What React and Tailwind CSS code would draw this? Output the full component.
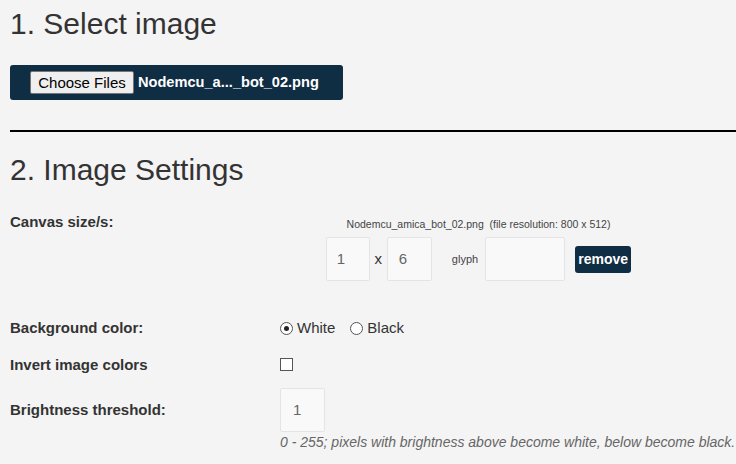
import { useState } from 'react';

export default function App() {
  const [bg, setBg] = useState('white');
  const [invert, setInvert] = useState(false);

  return (
    <div className="min-h-[464px] bg-[#f4f4f4] pl-[10px] text-[#333] font-['Liberation_Sans',Arial,sans-serif] overflow-hidden">
      <h1 className="pt-[7px] text-[30px] leading-[33px] font-normal">1. Select image</h1>

      <div className="mt-[25px] inline-flex h-[35px] items-center rounded-[3px] bg-[#0f2d43] pl-[20px] pr-[24px]">
        <button className="h-[23px] w-[104px] rounded-[2px] border border-[#767676] bg-[#efefef] text-[15px] leading-[21px] text-black">
          Choose Files
        </button>
        <span className="ml-[4px] text-[14.6px] font-bold text-white">Nodemcu_a..._bot_02.png</span>
      </div>

      <div className="mt-[30px] border-t-2 border-black" />

      <h2 className="mt-[21px] text-[30px] leading-[33px] font-normal">2. Image Settings</h2>

      {/* canvas size */}
      <div className="mt-[27px] flex">
        <div className="w-[270px] text-[15px] leading-[18px] font-bold">Canvas size/s:</div>
        <div className="flex w-[397px] flex-col items-center">
          <div className="mt-[5px] text-[10.5px] leading-[13px] text-[#444] whitespace-pre">
            Nodemcu_amica_bot_02.png  (file resolution: 800 x 512)
          </div>
          <div className="mt-[6px] flex items-center">
            <div className="flex h-[44px] w-[44px] items-center rounded-[2px] border border-[#e4e4e4] bg-[#f9f9f9] pl-[10px] text-[15px] text-[#666]">1</div>
            <span className="w-[17px] text-center text-[15px]">x</span>
            <div className="flex h-[44px] w-[45px] items-center rounded-[2px] border border-[#e4e4e4] bg-[#f9f9f9] pl-[11px] text-[15px] text-[#666]">6</div>
            <span className="ml-[20px] mr-[7px] text-[11px] text-[#444]">glyph</span>
            <div className="h-[44px] w-[80px] rounded-[2px] border border-[#e4e4e4] bg-[#f9f9f9]" />
            <button className="ml-[10px] h-[27px] w-[56px] rounded-[3px] bg-[#0f2d43] text-[14px] font-bold text-white">remove</button>
          </div>
        </div>
      </div>

      {/* background color */}
      <div className="mt-[38px] flex items-center">
        <div className="w-[270px] text-[15px] leading-[18px] font-bold">Background color:</div>
        <label className="flex items-center cursor-pointer" onClick={() => setBg('white')}>
          <span className="flex h-[13px] w-[13px] items-center justify-center rounded-full border border-[#555] bg-white">
            {bg === 'white' && <span className="h-[5px] w-[5px] rounded-full bg-[#222]" />}
          </span>
          <span className="ml-[4px] text-[15px] leading-[18px]">White</span>
        </label>
        <label className="ml-[15px] flex items-center cursor-pointer" onClick={() => setBg('black')}>
          <span className="flex h-[13px] w-[13px] items-center justify-center rounded-full border border-[#555] bg-white">
            {bg === 'black' && <span className="h-[5px] w-[5px] rounded-full bg-[#222]" />}
          </span>
          <span className="ml-[4px] text-[15px] leading-[18px]">Black</span>
        </label>
      </div>

      {/* invert */}
      <div className="mt-[19px] flex items-center">
        <div className="w-[270px] text-[15px] leading-[18px] font-bold">Invert image colors</div>
        <span
          onClick={() => setInvert(!invert)}
          className="-mt-[2px] flex h-[13px] w-[13px] items-center justify-center border border-[#555] bg-white text-[10px] leading-none cursor-pointer"
        >
          {invert ? '✓' : ''}
        </span>
      </div>

      {/* brightness */}
      <div className="mt-[14px] flex items-center">
        <div className="w-[270px] text-[15px] leading-[18px] font-bold">Brightness threshold:</div>
        <div className="flex h-[44px] w-[45px] items-center rounded-[2px] border border-[#e4e4e4] bg-[#f9f9f9] pl-[12px] text-[15px] text-[#666]">1</div>
      </div>
      <div className="ml-[270px] mt-[2px] text-[14px] leading-[16px] italic text-[#666] whitespace-nowrap">
        0 - 255; pixels with brightness above become white, below become black.
      </div>
    </div>
  );
}
